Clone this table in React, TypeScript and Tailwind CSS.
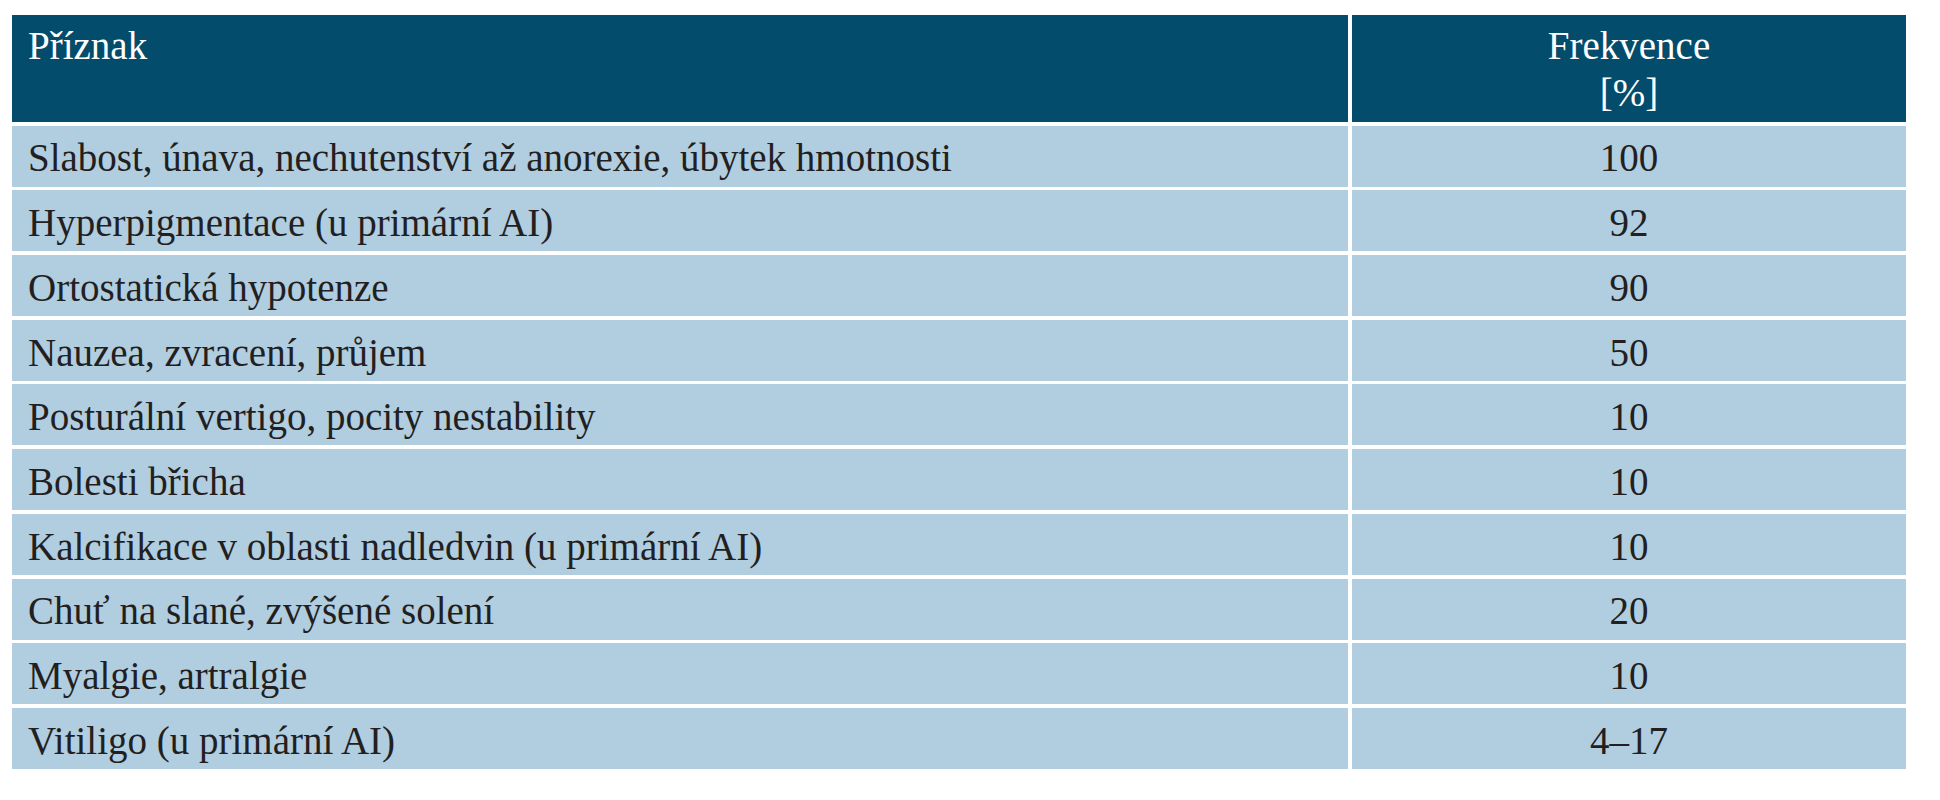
const rows: [string, string][] = [
  ["Slabost, únava, nechutenství až anorexie, úbytek hmotnosti", "100"],
  ["Hyperpigmentace (u primární AI)", "92"],
  ["Ortostatická hypotenze", "90"],
  ["Nauzea, zvracení, průjem", "50"],
  ["Posturální vertigo, pocity nestability", "10"],
  ["Bolesti břicha", "10"],
  ["Kalcifikace v oblasti nadledvin (u primární AI)", "10"],
  ["Chuť na slané, zvýšené solení", "20"],
  ["Myalgie, artralgie", "10"],
  ["Vitiligo (u primární AI)", "4–17"],
];

export default function App() {
  return (
    <div className="min-h-screen w-full bg-white pt-[15px] pl-[12px] font-['Liberation_Serif',serif]">
      <div className="grid w-[1894px] grid-cols-[1336px_554px] gap-x-[4px] gap-y-[3.7px]">
        {/* hlavička */}
        <div className="h-[107px] bg-[#034c6b] pl-[16px] pt-[7px] text-[39px] leading-[47px] text-white">
          Příznak
        </div>
        <div className="h-[107px] bg-[#034c6b] pt-[7px] text-center text-[39px] leading-[47px] text-white">
          Frekvence
          <br />
          [%]
        </div>

        {rows.map(([name, freq], i) => (
          <div key={i} className="contents">
            <div className="flex h-[61px] items-center bg-[#b1cde0] pl-[16px] pt-[5px] text-[39px] text-[#231f20]">
              {name}
            </div>
            <div className="flex h-[61px] items-center justify-center bg-[#b1cde0] pt-[5px] text-[39px] text-[#231f20]">
              {freq}
            </div>
          </div>
        ))}
      </div>
    </div>
  );
}
